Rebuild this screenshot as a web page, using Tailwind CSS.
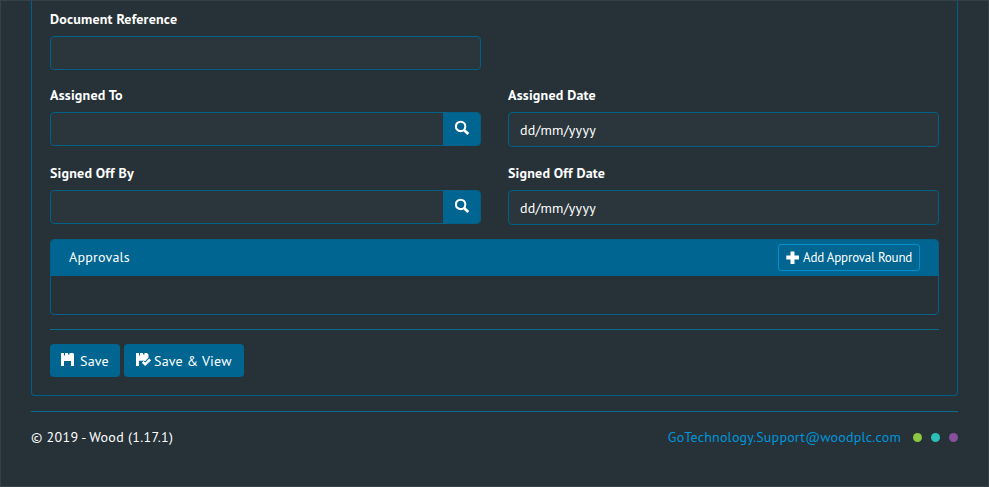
<!DOCTYPE html>
<html lang="en">
<head>
<meta charset="utf-8">
<title>Document</title>
<script src="https://cdn.jsdelivr.net/npm/@tailwindcss/browser@4"></script>
</head>
<body class="bg-[#263238]">
<div class="flex h-[487px] w-[989px] flex-col overflow-hidden border border-[#344147] bg-[#263238] px-[30px] font-['PT_Sans','Noto_Sans',sans-serif] text-[14px] leading-5 tracking-[0.2px] text-white">
  <main class="h-[395px] shrink-0 rounded-b border border-t-0 border-[#006087] px-[18px] pt-[8px]">
    <div class="grid grid-cols-2 gap-x-[27px]">
      <div class="col-span-2 h-[76px] w-[431px]">
        <label class="block font-bold tracking-[0.2px]">Document Reference</label>
        <div class="mt-[7px] h-[34px] rounded border border-[#006087] bg-[#2b363c]"></div>
      </div>
      <div class="h-[78px]">
        <label class="block font-bold tracking-[0.2px]">Assigned To</label>
        <div class="mt-[7px] flex h-[34px] overflow-hidden rounded border border-[#006087] bg-[#2b363c]">
          <div class="flex-1"></div>
          <button class="flex w-[37px] items-center justify-center bg-[#006691] pb-[2px]"><svg class="h-4 w-4" viewBox="0 0 16 16" fill="none" stroke="white"><circle cx="6.6" cy="6.4" r="4.7" stroke-width="2.1"/><path d="M10 10l4.3 4" stroke-width="2.8"/></svg></button>
        </div>
      </div>
      <div class="h-[78px]">
        <label class="block font-bold tracking-[0.2px]">Assigned Date</label>
        <div class="mt-[7px] flex h-[35px] items-center rounded border border-[#006087] bg-[#2b363c] px-[11px] tracking-[0.18px]">dd/mm/yyyy</div>
      </div>
      <div class="h-[76px]">
        <label class="block font-bold tracking-[0.2px]">Signed Off By</label>
        <div class="mt-[7px] flex h-[34px] overflow-hidden rounded border border-[#006087] bg-[#2b363c]">
          <div class="flex-1"></div>
          <button class="flex w-[37px] items-center justify-center bg-[#006691] pb-[2px]"><svg class="h-4 w-4" viewBox="0 0 16 16" fill="none" stroke="white"><circle cx="6.6" cy="6.4" r="4.7" stroke-width="2.1"/><path d="M10 10l4.3 4" stroke-width="2.8"/></svg></button>
        </div>
      </div>
      <div class="h-[76px]">
        <label class="block font-bold tracking-[0.2px]">Signed Off Date</label>
        <div class="mt-[7px] flex h-[35px] items-center rounded border border-[#006087] bg-[#2b363c] px-[11px] tracking-[0.18px]">dd/mm/yyyy</div>
      </div>
    </div>
    <section class="h-[76px] overflow-hidden rounded border border-[#006087]">
      <header class="flex h-9 items-center justify-between bg-[#006691] pb-[2px] pl-[18px] pr-[18px]">
        <span class="pb-px">Approvals</span>
        <button class="flex h-[27px] w-[142px] items-center gap-1 whitespace-nowrap rounded-[3px] border border-[#008fcc] pl-[7px] text-[13px] tracking-[-0.2px]"><svg class="h-[13px] w-[13px] shrink-0" viewBox="0 0 13 13" fill="white"><path d="M4.500 .5h4V4.500H13v4H8.500V13h-4V8.500H.3v-4h4.200z"/></svg><span class="pt-[2px]">Add Approval Round</span></button>
      </header>
    </section>
    <hr class="mt-[14px] border-[#0a6b8b]">
    <div class="mt-[14px] flex gap-1">
      <button class="flex h-[33px] w-[70px] gap-1 rounded bg-[#006691] pl-[10px] pt-[7px]"><svg class="mt-px h-[15px] w-[15px] shrink-0" viewBox="0 0 15 15"><path d="M1 1h12l1 1v12h-3V9H4v5H1z" fill="white"/><path d="M4 1h1v2.500H4zM8 1h1.500v1.500H8z" fill="#006691"/></svg><span class="pl-px">Save</span></button>
      <button class="flex h-[33px] w-[120px] gap-[3px] whitespace-nowrap rounded bg-[#006691] pl-[11px] pt-[7px]"><svg class="mt-px h-[15px] w-4 shrink-0" viewBox="0 0 16 15"><path d="M1 1h11l1.500 1.500V7l-3 3-2-1.300H4V14H1z" fill="white"/><path d="M4 1h1v2.500H4zM8 1h1.500v1.500H8z" fill="#006691"/><path d="M7.500 10l2.500 2.300 5-5" fill="none" stroke="#006691" stroke-width="4.200"/><path d="M7.700 9.800l2.500 2.500 5-4.800" fill="none" stroke="white" stroke-width="2.600"/></svg><span>Save &amp; View</span></button>
    </div>
  </main>
  <hr class="mt-[15px] shrink-0 border-[#0a6b8b]">
  <footer class="mt-[15px] flex items-center justify-between">
    <span class="tracking-[0.3px]">© 2019 - Wood (1.17.1)</span>
    <div class="flex items-center">
      <a class="text-[#0095db]">GoTechnology.Support@woodplc.com</a>
      <div class="ml-3 flex gap-[9px] pt-px"><i class="size-[9px] rounded-full bg-[#8dc63f]"></i><i class="size-[9px] rounded-full bg-[#2bbfb8]"></i><i class="size-[9px] rounded-full bg-[#87509a]"></i></div>
    </div>
  </footer>
</div>
</body>
</html>
